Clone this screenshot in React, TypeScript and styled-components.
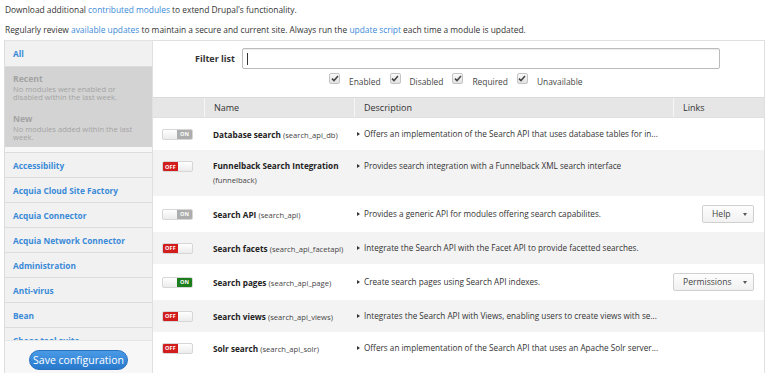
import React from "react";
import styled, { createGlobalStyle } from "styled-components";

const Global = createGlobalStyle`
  html, body { margin: 0; padding: 0; background: #fff; }
  body { font-family: "Open Sans", "DejaVu Sans", sans-serif; color: #333; width: 768px; height: 373px; overflow: hidden; }
  * { box-sizing: border-box; }
`;

const Intro = styled.div`
  padding: 3px 5px 0 5px;
  height: 40px;
`;

const P = styled.p`
  margin: 0 0 7px 0;
  font-size: 8.4px;
  line-height: 13px;
  color: #333;
  white-space: nowrap;
`;

const A = styled.a`
  color: #3a8ad8;
  text-decoration: none;
`;

const Layout = styled.div`
  display: flex;
  height: 333px;
  padding-left: 4px;
  padding-right: 3px;
`;

const Sidebar = styled.div`
  width: 148px;
  display: flex;
  flex-direction: column;
  border-left: 1px solid #ddd;
  border-top: 1px solid #e3e3e3;
  background: #f5f5f5;
`;

const SideList = styled.div`
  flex: 1;
  overflow: hidden;
`;

const SideItem = styled.div<{ $h?: number }>`
  height: ${(p) => p.$h || 25}px;
  display: flex;
  align-items: center;
  padding-left: 8px;
  background: #f1f1f1;
  border-bottom: 1px solid #dcdcdc;
  font-size: 8.3px;
  font-weight: 700;
  color: #3a8ad8;
  white-space: nowrap;
`;

const InfoBlock = styled.div`
  height: 40px;
  background: #d3d3d3;
  padding: 7px 8px 0 8px;
  color: #a3a3a3;
`;

const InfoTitle = styled.div`
  font-size: 8.6px;
  font-weight: 700;
  line-height: 11px;
`;

const InfoText = styled.div`
  font-size: 7.6px;
  line-height: 8px;
`;

const Spacer = styled.div`
  height: 6px;
  background: #f7f7f7;
  border-bottom: 1px solid #dcdcdc;
`;

const SideFooter = styled.div`
  height: 33px;
  display: flex;
  align-items: center;
  justify-content: center;
  background: #f7f7f7;
  border-top: 1px solid #e6e6e6;
`;

const SaveButton = styled.button`
  font-family: inherit;
  font-size: 10.5px;
  color: #fff;
  background: linear-gradient(#4a9be6, #2878cc);
  border: 1px solid #2a72c0;
  border-radius: 11px;
  height: 20px;
  width: 99px;
  padding: 0;
  margin-top: 5px;
`;

const Main = styled.div`
  flex: 1;
  border: 1px solid #e0e0e0;
  border-bottom: none;
  display: flex;
  flex-direction: column;
  overflow: hidden;
`;

const Filter = styled.div`
  height: 56px;
  padding-top: 7px;
`;

const FilterRow = styled.div`
  display: flex;
  align-items: center;
  padding-left: 42px;
`;

const FilterLabel = styled.label`
  font-size: 9px;
  font-weight: 700;
  width: 47px;
`;

const Input = styled.div`
  width: 478px;
  height: 21px;
  border: 1px solid #bbb;
  border-radius: 2px;
  box-shadow: inset 0 1px 1px rgba(0,0,0,0.08);
  display: flex;
  align-items: center;
  padding-left: 4px;
`;

const Caret = styled.div`
  width: 1px;
  height: 12px;
  background: #333;
`;

const Checks = styled.div`
  display: flex;
  align-items: flex-start;
  padding-left: 176px;
  margin-top: 4px;
`;

const CheckItem = styled.div`
  display: flex;
  align-items: flex-start;
  margin-right: 9px;
`;

const Box = styled.span`
  width: 11px;
  height: 11px;
  border: 1px solid #c4c4c4;
  border-radius: 2px;
  background: linear-gradient(#fafafa, #e2e2e2);
  display: inline-flex;
  align-items: center;
  justify-content: center;
  margin-right: 9px;
`;

const CheckLabel = styled.span`
  font-size: 8.4px;
  color: #444;
  margin-top: 3px;
`;

const Table = styled.div`
  display: flex;
  flex-direction: column;
`;

const Grid = styled.div<{ $bg?: string; $h: number }>`
  display: grid;
  grid-template-columns: 51px 150px 319px 1fr;
  height: ${(p) => p.$h}px;
  background: ${(p) => p.$bg || "#fff"};
`;

const Head = styled(Grid)`
  background: #e6e6e6;
  border-top: 1px solid #dadada;
  border-bottom: 1px solid #e0e0e0;
`;

const HeadCell = styled.div<{ $sep?: boolean }>`
  display: flex;
  align-items: center;
  padding-left: 9px;
  font-size: 9px;
  color: #333;
  border-left: ${(p) => (p.$sep ? "1px solid #f6f6f6" : "none")};
`;

const Cell = styled.div<{ $top?: boolean }>`
  display: flex;
  align-items: ${(p) => (p.$top ? "flex-start" : "center")};
  padding-top: ${(p) => (p.$top ? "9px" : "0")};
  padding-left: 9px;
  font-size: 8.2px;
  color: #333;
  white-space: nowrap;
  overflow: hidden;
`;

const DescCell = styled(Cell)`
  padding-left: 3px;
`;

const DescText = styled.span`
  display: block;
  overflow: hidden;
  text-overflow: ellipsis;
  line-height: 14px;
`;

const ToggleCell = styled(Cell)`
  padding-left: 9px;
  padding-top: ${(p) => (p.$top ? "11px" : "0")};
`;

const NameWrap = styled.div`
  line-height: 14px;
`;

const Machine = styled.span`
  font-weight: 400;
  font-size: 7.6px;
  color: #444;
`;

const Bold = styled.span`
  font-weight: 700;
  color: #222;
`;

const Tri = styled.span`
  display: inline-block;
  vertical-align: 1px;
  width: 0;
  height: 0;
  border-top: 2.5px solid transparent;
  border-bottom: 2.5px solid transparent;
  border-left: 3px solid #333;
  margin-right: 4px;
`;

const Toggle = styled.div`
  width: 31px;
  height: 11px;
  border: 1px solid #d6d6d6;
  border-radius: 2px;
  background: linear-gradient(#fff, #ececec);
  display: flex;
  overflow: hidden;
`;

const Knob = styled.div<{ $c: string }>`
  width: 15px;
  height: 100%;
  background: ${(p) => p.$c};
  color: #fff;
  font-size: 5.5px;
  font-weight: 700;
  display: flex;
  align-items: center;
  justify-content: center;
  letter-spacing: 0.2px;
`;

const Pad = styled.div`
  flex: 1;
`;

const DropButton = styled.div<{ $w: number }>`
  width: ${(p) => p.$w}px;
  height: 18px;
  border: 1px solid #d0d0d0;
  border-radius: 2px;
  background: linear-gradient(#fdfdfd, #f1f1f1);
  display: flex;
  align-items: center;
  justify-content: space-between;
  padding: 0 6px 0 9px;
  font-size: 8.6px;
  color: #444;
`;

const DownCaret = styled.span`
  width: 0;
  height: 0;
  border-left: 2.5px solid transparent;
  border-right: 2.5px solid transparent;
  border-top: 3px solid #555;
`;

const LinkCell = styled(Cell)`
  padding-left: 0;
  justify-content: flex-end;
  padding-right: 10px;
`;

type Mod = {
  name: string;
  machine: string;
  desc: string;
  state: "on" | "off" | "green";
  h: number;
  wrap?: boolean;
  link?: { label: string; w: number };
};

const mods: Mod[] = [
  { name: "Database search", machine: "search_api_db", desc: "Offers an implementation of the Search API that uses database tables for in...", state: "on", h: 32 },
  { name: "Funnelback Search Integration", machine: "funnelback", desc: "Provides search integration with a Funnelback XML search interface", state: "off", h: 46, wrap: true },
  { name: "Search API", machine: "search_api", desc: "Provides a generic API for modules offering search capabilites.", state: "on", h: 36, link: { label: "Help", w: 52 } },
  { name: "Search facets", machine: "search_api_facetapi", desc: "Integrate the Search API with the Facet API to provide facetted searches.", state: "off", h: 32 },
  { name: "Search pages", machine: "search_api_page", desc: "Create search pages using Search API indexes.", state: "green", h: 36, link: { label: "Permissions", w: 82 } },
  { name: "Search views", machine: "search_api_views", desc: "Integrates the Search API with Views, enabling users to create views with se...", state: "off", h: 32 },
  { name: "Solr search", machine: "search_api_solr", desc: "Offers an implementation of the Search API that uses an Apache Solr server...", state: "off", h: 32 },
];

const Check = () => (
  <Box>
    <svg width="8" height="7" viewBox="0 0 8 7">
      <path d="M1 3.6 L3 5.6 L7 1" stroke="#444" strokeWidth="1.5" fill="none" />
    </svg>
  </Box>
);

const ToggleSwitch = ({ state }: { state: Mod["state"] }) => (
  <Toggle>
    {state === "off" ? (
      <>
        <Knob $c="#d21d1d">OFF</Knob>
        <Pad />
      </>
    ) : (
      <>
        <Pad />
        <Knob $c={state === "green" ? "#1c7d1c" : "#adadad"}>ON</Knob>
      </>
    )}
  </Toggle>
);

const categories = [
  "Accessibility",
  "Acquia Cloud Site Factory",
  "Acquia Connector",
  "Acquia Network Connector",
  "Administration",
  "Anti-virus",
  "Bean",
  "Chaos tool suite",
];

export default function App() {
  return (
    <>
      <Global />
      <Intro>
        <P>
          Download additional <A href="#">contributed modules</A> to extend Drupal's functionality.
        </P>
        <P>
          Regularly review <A href="#">available updates</A> to maintain a secure and current site. Always run the{" "}
          <A href="#">update script</A> each time a module is updated.
        </P>
      </Intro>
      <Layout>
        <Sidebar>
          <SideList>
            <SideItem $h={26}>All</SideItem>
            <InfoBlock>
              <InfoTitle>Recent</InfoTitle>
              <InfoText>No modules were enabled or disabled within the last week.</InfoText>
            </InfoBlock>
            <InfoBlock>
              <InfoTitle>New</InfoTitle>
              <InfoText>No modules added within the last week.</InfoText>
            </InfoBlock>
            <Spacer />
            {categories.map((c) => (
              <SideItem key={c}>{c}</SideItem>
            ))}
          </SideList>
          <SideFooter>
            <SaveButton>Save configuration</SaveButton>
          </SideFooter>
        </Sidebar>
        <Main>
          <Filter>
            <FilterRow>
              <FilterLabel>Filter list</FilterLabel>
              <Input>
                <Caret />
              </Input>
            </FilterRow>
            <Checks>
              {["Enabled", "Disabled", "Required", "Unavailable"].map((l) => (
                <CheckItem key={l}>
                  <Check />
                  <CheckLabel>{l}</CheckLabel>
                </CheckItem>
              ))}
            </Checks>
          </Filter>
          <Table>
            <Head $h={21}>
              <HeadCell />
              <HeadCell $sep>Name</HeadCell>
              <HeadCell $sep>Description</HeadCell>
              <HeadCell $sep>Links</HeadCell>
            </Head>
            {mods.map((m, i) => (
              <Grid key={m.machine} $h={m.h} $bg={i % 2 === 1 ? "#f3f3f3" : "#fff"}>
                <ToggleCell $top={m.wrap}>
                  <ToggleSwitch state={m.state} />
                </ToggleCell>
                <Cell $top={m.wrap}>
                  {m.wrap ? (
                    <NameWrap>
                      <Bold>{m.name}</Bold>
                      <br />
                      <Machine>({m.machine})</Machine>
                    </NameWrap>
                  ) : (
                    <span>
                      <Bold>{m.name}</Bold> <Machine>({m.machine})</Machine>
                    </span>
                  )}
                </Cell>
                <DescCell $top={m.wrap}>
                  <DescText>
                    <Tri />
                    {m.desc}
                  </DescText>
                </DescCell>
                <LinkCell>
                  {m.link && (
                    <DropButton $w={m.link.w}>
                      {m.link.label}
                      <DownCaret />
                    </DropButton>
                  )}
                </LinkCell>
              </Grid>
            ))}
          </Table>
        </Main>
      </Layout>
    </>
  );
}
